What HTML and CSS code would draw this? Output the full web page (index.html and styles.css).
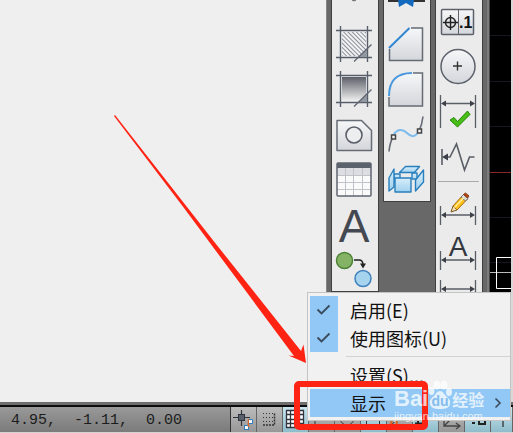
FILE: index.html
```
<!doctype html>
<html lang="zh-CN">
<head>
<meta charset="utf-8">
<title>CAD</title>
<meta name="viewport" content="width=device-width">
<link rel="stylesheet" href="styles.css">
</head>

<body>

<!-- shared gradients and dimension arrows -->
<svg class="defs" width="0" height="0" aria-hidden="true">
  <defs>
    <linearGradient id="face" x1="0" y1="0" x2="0" y2="1">
      <stop offset="0" stop-color="#f6f7f8"/><stop offset="1" stop-color="#d3d6db"/>
    </linearGradient>
    <linearGradient id="shade" x1="0" y1="0" x2="0" y2="1">
      <stop offset="0" stop-color="#5c6068"/><stop offset="1" stop-color="#f0f0f0"/>
    </linearGradient>
    <linearGradient id="ice" x1="0" y1="0" x2="0" y2="1">
      <stop offset="0" stop-color="#d8eefa"/><stop offset="1" stop-color="#9fd0ee"/>
    </linearGradient>
    <pattern id="hatch" width="3" height="3" patternUnits="userSpaceOnUse" patternTransform="rotate(-45)">
      <rect width="3" height="3" fill="#f1f2f4"/><rect width="1" height="3" fill="#8b919a"/>
    </pattern>
    <g id="dim">
      <path d="M4.500-9v19M39.500-9v19M7 0h30" fill="none" stroke="#5a5e66" stroke-width="1.300"/>
      <path d="M5 0l5-3v6zM39 0l-5-3v6z" fill="#3c4048"/>
    </g>
  </defs>
</svg>

<div class="app">
  <div class="workspace">
    <main class="canvas"></main>

    <div class="dock">
      <div class="toolbar">
        <button class="tool tool-cut" aria-label="点">
          <svg width="46" height="21"><path d="M20 0h4l-2 1z" fill="#666" stroke="#777"/></svg>
        </button>
        <button class="tool" aria-label="图案填充">
          <svg width="46" height="45">
            <rect x="9" y="10" width="26" height="26" fill="#f1f2f4"/>
            <rect x="10" y="11" width="24" height="24" fill="url(#hatch)"/>
            <path d="M4 9.500h36M4 36.500h36M8.500 5v36M35.500 5v36" stroke="#585e69" stroke-width="1.400"/>
            <path d="M35 28v8h-8z" fill="#9298a2"/>
            <path d="M39.500 23.500l-17.500 17" stroke="#5f6570" stroke-width="1.300"/>
          </svg>
        </button>
        <button class="tool" aria-label="渐变色">
          <svg width="46" height="45">
            <rect x="9" y="10" width="26" height="26" fill="#f1f2f4"/>
            <rect x="10" y="11" width="24" height="24" fill="url(#shade)"/>
            <path d="M4 9.500h36M4 36.500h36M8.500 5v36M35.500 5v36" stroke="#585e69" stroke-width="1.400"/>
            <path d="M35 28v8h-8z" fill="#9298a2"/>
            <path d="M39.500 23.500l-17.500 17" stroke="#5f6570" stroke-width="1.300"/>
          </svg>
        </button>
        <button class="tool" aria-label="面域">
          <svg width="46" height="45">
            <path d="M5 9.500h24.500l10 10V39.500H5z" fill="url(#face)" stroke="#666b75" stroke-width="1.500" stroke-linejoin="round"/>
            <circle cx="22" cy="24" r="8" fill="#eceef0" stroke="#5b606a" stroke-width="1.600"/>
          </svg>
        </button>
        <button class="tool" aria-label="表格">
          <svg width="46" height="45">
            <rect x="5" y="7" width="34" height="33" rx="1" fill="#fafafa"/>
            <rect x="5" y="12" width="34" height="7" fill="#dcdee4"/>
            <path d="M13.500 12v28M21.500 12v28M30.500 12v28M5 19.500h34M5 26.500h34M5 33.500h34" stroke="#c0c4ca"/>
            <rect x="5" y="7" width="34" height="5" fill="#5a626e"/>
            <rect x="5" y="7" width="34" height="33" rx="1" fill="none" stroke="#5f6570" stroke-width="1.500"/>
          </svg>
        </button>
        <button class="tool" aria-label="多行文字">
          <svg width="46" height="45"><text class="glyph-large" x="22" y="41" text-anchor="middle">A</text></svg>
        </button>
        <button class="tool" aria-label="添加选定对象">
          <svg width="46" height="45">
            <circle cx="12.500" cy="14.500" r="8" fill="#85b366" stroke="#4c8136" stroke-width="1.500"/>
            <circle cx="31" cy="32.500" r="8" fill="#a6d3ee" stroke="#3c80bd" stroke-width="1.500"/>
            <path d="M22 14h5q4 0 4 5" fill="none" stroke="#222" stroke-width="1.500"/>
            <path d="M28 17.500h6l-3 5z" fill="#222"/>
          </svg>
        </button>
      </div>

      <div class="toolbar">
        <button class="tool tool-cut" aria-label="分解">
          <svg width="46" height="21">
            <path d="M4 .500h37" stroke="#333" stroke-width="3"/>
            <path d="M14 0h16l-1 7-7-4-7 4z" fill="#1369bd"/>
          </svg>
        </button>
        <button class="tool" aria-label="倒角">
          <svg width="46" height="45">
            <path d="M5.500 27l20-20h13v32.500h-33z" fill="url(#face)"/>
            <path d="M5.500 28v11.500h33V7H27" fill="none" stroke="#666b75" stroke-width="1.500"/>
            <path d="M5 27L25.500 7" stroke="#3386d0" stroke-width="2"/>
          </svg>
        </button>
        <button class="tool" aria-label="圆角">
          <svg width="46" height="45">
            <path d="M5 30Q5 7 28 7h10.500v33H5z" fill="url(#face)"/>
            <path d="M5 31v9h33.500V7H29" fill="none" stroke="#666b75" stroke-width="1.500"/>
            <path d="M5 30Q5 7 28 7" fill="none" stroke="#4a9add" stroke-width="2"/>
          </svg>
        </button>
        <button class="tool" aria-label="光顺曲线">
          <svg width="46" height="45">
            <path d="M5 40.500Q6 31 9 26M35 20Q38 14 39 5.500" fill="none" stroke="#666b75" stroke-width="1.600"/>
            <path d="M9 25C13 17 19 18 23 22S31 27 35 20" fill="none" stroke="#7dbbec" stroke-width="2"/>
            <path d="M7.500 24h4v4h-4zM33.500 18h4v4h-4z" fill="#f4f4f4" stroke="#444" stroke-width="1.500"/>
          </svg>
        </button>
        <button class="tool" aria-label="截面">
          <svg width="46" height="45">
            <g fill="url(#ice)" stroke="#287fbd" stroke-width="1.400" stroke-linejoin="round">
              <path d="M10 18h6v8h-6zM28 17h5v6h-5z"/>
              <path d="M5 22l5-9v18l-5 4z"/>
              <path d="M15.500 16.500l6-6h14l-5 6z"/>
              <path d="M31.500 24l8-10v12l-8 9z"/>
              <path d="M11 22h16v14H11z"/>
            </g>
          </svg>
        </button>
      </div>

      <div class="toolbar toolbar-tall">
        <button class="tool" aria-label="公差">
          <svg width="46" height="45">
            <rect x="5.500" y="9.500" width="32" height="25" rx="1" fill="url(#face)" stroke="#5b606a" stroke-width="1.500"/>
            <path d="M22.500 10v24" stroke="#5b606a"/>
            <path d="M7 22.500h15M14.500 15v15" stroke="#222" stroke-width="1.400"/>
            <circle cx="14.500" cy="22.500" r="5" fill="none" stroke="#222" stroke-width="1.400"/>
            <text class="glyph-small" x="23" y="28">.1</text>
          </svg>
        </button>
        <button class="tool" aria-label="圆心标记">
          <svg width="46" height="45">
            <circle cx="22" cy="21.500" r="17" fill="url(#face)" stroke="#5b606a" stroke-width="1.500"/>
            <path d="M17 21h9M21.500 16.500v9" stroke="#333" stroke-width="1.400"/>
          </svg>
        </button>
        <button class="tool" aria-label="检验">
          <svg width="46" height="45">
            <path d="M4.500 5v33M39.500 5v33M7 13.500h30" stroke="#5a5e66" stroke-width="1.300"/>
            <path d="M5 13.500l5-3v6zM39 13.500l-5-3v6z" fill="#3c4048"/>
            <path d="M14 30l4-2.500 3.500 4L31.500 21l2.500 3.500L21.500 37z" fill="#47bd16" stroke="#25870b"/>
          </svg>
        </button>
        <button class="tool" aria-label="折弯线性">
          <svg width="46" height="45">
            <path d="M6 14v16M9 22h5l6.500-13 8 26 5-13h5" fill="none" stroke="#5a5e66" stroke-width="1.600"/>
            <path d="M6 22l6-3.500v7z" fill="#3c4048"/>
          </svg>
        </button>
        <hr class="rule">
        <button class="tool" aria-label="编辑标注">
          <svg width="46" height="45">
            <use href="#dim" x="0" y="31"/>
            <path d="M15 28l2-6 4 4z" fill="#f3dfb4" stroke="#7b5a22"/>
            <path d="M17 22L27 11l4.500 4L21 26z" fill="#ffc01e" stroke="#a06c14"/>
            <path d="M25 13l2.500-2.500 4.500 4-2.500 2.500z" fill="#d9d9d9" stroke="#777"/>
            <path d="M27.500 10.500l2-1.500 3.500 3-1.500 2z" fill="#b24a1c" stroke="#8b3a14"/>
            <path d="M18.500 23.500L28 13.500" stroke="#fff0a0" stroke-width="1.300"/>
          </svg>
        </button>
        <button class="tool" aria-label="编辑标注文字">
          <svg width="46" height="45">
            <use href="#dim" x="0" y="31"/>
            <text class="glyph-medium" x="22" y="27" text-anchor="middle">A</text>
          </svg>
        </button>
        <button class="tool" aria-label="标注更新">
          <svg width="46" height="45"><use href="#dim" x="0" y="15"/></svg>
        </button>
      </div>
    </div>

    <div class="drawing">
      <svg width="21" height="402">
        <path d="M0 35.500h21M0 81.500h21M0 126.500h21M0 217.500h21M0 262.500h21" stroke="#17171f"/>
        <path d="M0 172.500h21" stroke="#8a2626"/>
        <path d="M0 272.500h21" stroke="#bbb"/>
        <path d="M21 257.500H6.500v31H21" fill="none" stroke="#fff"/>
      </svg>
    </div>
  </div>

  <footer class="statusbar">
    <output class="coords">4.95,&nbsp; -1.11,&nbsp; 0.00</output>
    <button class="toggle" aria-label="推断约束">
      <svg width="25" height="25">
        <path d="M2 10.500h17M10.500 3v16" stroke="#30353d" stroke-width="1.200"/>
        <rect x="7.500" y="7.500" width="6" height="6" fill="#59616d" stroke="#30353d"/>
        <rect x="13.500" y="18.500" width="4" height="4" fill="#fff" stroke="#2f7cc0"/>
        <path d="M17.500 20v-8" stroke="#d9682a" stroke-width="1.500"/>
        <path d="M18 12.500h3.500v4H18" fill="#fff" stroke="#2f7cc0"/>
      </svg>
    </button>
    <button class="toggle" aria-label="捕捉模式">
      <svg width="25" height="25">
        <path d="M6 6.500h10M6 10.500h10M6 14.500h10" stroke="#333" stroke-width="1.200" stroke-dasharray="1 2"/>
        <path d="M6 18h11.500V6" fill="none" stroke="#333" stroke-width="1.500" stroke-dasharray="2 1"/>
      </svg>
    </button>
    <button class="toggle on" aria-label="栅格显示">
      <svg width="25" height="25">
        <rect x="3" y="3" width="18" height="18" fill="#fff"/>
        <path d="M3 3.500h18M3 7.500h18M3 12.500h18M3 16.500h18M3 20.500h18M3.500 3v18M7.500 3v18M12.500 3v18M16.500 3v18M20.500 3v18" stroke="#30353d" stroke-width="1.300"/>
      </svg>
    </button>
    <button class="toggle" aria-label="正交模式"><svg width="25" height="25"><path d="M6 5v14h13" fill="none" stroke="#333"/></svg></button>
    <button class="toggle" aria-label="极轴追踪"><svg width="25" height="25"><circle cx="12" cy="11" r="7" fill="none" stroke="#444"/></svg></button>
    <button class="toggle on" aria-label="对象捕捉"><svg width="25" height="25"><rect x="5.500" y="5.500" width="13" height="12" fill="none" stroke="#333"/></svg></button>
    <button class="toggle" aria-label="三维对象捕捉"><svg width="25" height="25"><path d="M5 17l12-10" stroke="#333"/><circle cx="7" cy="16" r="3" fill="none" stroke="#d9682a" stroke-width="2"/></svg></button>
    <button class="toggle on" aria-label="对象捕捉追踪"><svg width="25" height="25"><path d="M2 16.500h13M5 13v7" stroke="#222" stroke-width="2"/></svg></button>
    <button class="toggle" aria-label="动态 UCS"><svg width="25" height="25"><path d="M5 5v14h15M5 19l12-12M17 16l4 3-4 3" fill="none" stroke="#444" stroke-width="1.300"/></svg></button>
    <button class="toggle on" aria-label="动态输入"><svg width="25" height="25"><path d="M7 16h3M14 10h6v7h-6z" fill="none" stroke="#222" stroke-width="2"/></svg></button>
    <button class="toggle on" aria-label="线宽"><svg width="25" height="25"><path d="M12 5v15" stroke="#333" stroke-width="1.300"/></svg></button>
  </footer>

  <div class="menu" role="menu">
    <button class="item checked" role="menuitemcheckbox" aria-checked="true">
      <span class="mark"><svg width="16" height="12"><path d="M1.500 5.500l4 4 8-8" fill="none" stroke="#3b4b5c" stroke-width="1.800"/></svg></span>
      <span>启用(E)</span>
    </button>
    <button class="item checked" role="menuitemcheckbox" aria-checked="true">
      <span class="mark"><svg width="16" height="12"><path d="M1.500 5.500l4 4 8-8" fill="none" stroke="#3b4b5c" stroke-width="1.800"/></svg></span>
      <span>使用图标(U)</span>
    </button>
    <hr class="divider">
    <button class="item" role="menuitem"><span class="mark"></span><span>设置(S)...</span></button>
    <button class="item current" role="menuitem" aria-haspopup="true">
      <span class="mark"></span><span>显示</span>
      <svg class="more" width="8" height="12"><path d="M1.500 1.500l4.500 4.500-4.500 4.500" fill="none" stroke="#3b4b5c" stroke-width="1.600"/></svg>
    </button>
  </div>

  <svg class="arrow" width="192" height="250" aria-hidden="true">
    <path d="M0 1L1 0 100 126.500 187 236l2.500-6.500 2.500 18.500-17.500-7.500 5.500.500L70 93z" fill="#ff2314"/>
  </svg>
  <div class="highlight"></div>

  <div class="watermark">
    <div class="brand">
      <span class="latin">Bai</span>
      <svg width="24" height="30">
        <g fill="#fff">
          <ellipse cx="3.500" cy="11" rx="3" ry="4"/>
          <ellipse cx="9" cy="5" rx="3.500" ry="4.500"/>
          <ellipse cx="16" cy="5" rx="3.500" ry="4.500"/>
          <ellipse cx="21" cy="12" rx="3" ry="4"/>
          <path d="M12 11c3 0 4 3 6 5s5 4 4 8-4 5-10 5-9-1-10-5 2-6 4-8 3-5 6-5z"/>
        </g>
        <text class="du" x="12" y="26" text-anchor="middle">du</text>
      </svg>
      <span class="hanzi">经验</span>
    </div>
    <div class="site">jingyan.baidu.com</div>
  </div>
</div>

</body>
</html>
```
FILE: styles.css
```
* {
	box-sizing: border-box;
}
body {
	margin: 0;
	font-family: "Liberation Sans", "Noto Sans CJK SC", sans-serif;
	background: #efefef;
}
button {
	margin: 0;
	padding: 0;
	border: 0;
	background: none;
	font: inherit;
	color: inherit;
}
svg {
	display: block;
}
.defs {
	position: absolute;
}
.app {
	position: relative;
	display: flex;
	flex-direction: column;
	height: 100vh;
	overflow: hidden;
}

/* drawing area with docked toolbars */
.workspace {
	flex: 1;
	min-height: 0;
	display: flex;
	overflow: hidden;
}
.canvas {
	flex: 1;
	background: #efefef;
}
.dock {
	display: flex;
	align-items: flex-start;
	gap: 4px;
	padding: 0 7px 0 5px;
	background: #686868;
	box-shadow: inset 1px 0 #858585, inset -1px 0 #484848, inset -3px 0 #7d7d7d;
}
.toolbar {
	width: 48px;
	border: 1px solid #3f3f3f;
	border-top: 0;
	background: #ebebeb;
}
.toolbar-tall {
	border-bottom: 0;
}
.tool {
	display: block;
	width: 100%;
	height: 45px;
}
.tool svg {
	overflow: visible;
}
.tool-cut {
	height: 21px;
}
.tool-cut svg {
	overflow: hidden;
}
.rule {
	height: 1px;
	margin: 1px 3px 2px 2px;
	border: 0;
	background: #aaa;
}
.glyph-large {
	font-size: 46px;
	fill: #444850;
}
.glyph-medium {
	font-size: 28px;
	fill: #35383f;
}
.glyph-small {
	font-size: 16px;
	font-weight: bold;
	fill: #111;
}
.drawing {
	background: #000;
	border-right: 2px solid #d8d8d8;
}

/* status bar */
.statusbar {
	display: flex;
	height: 31px;
	border-top: 3px solid #6e6e6e;
	border-bottom: 1px solid #d5d5d5;
	background: #888;
	box-shadow: inset 0 2px #0c0c0c;
	padding-top: 2px;
}
.coords {
	width: 231px;
	padding-left: 11px;
	border-right: 1px solid #333;
	background: linear-gradient(#999, #7b7b7b);
	color: #1c1c1c;
	font: 15px/28px "Liberation Mono", monospace;
}
.toggle {
	width: 26px;
	border-right: 1px solid #666;
	background: linear-gradient(#bcbcbc, #979797);
	overflow: hidden;
}
.toggle.on {
	background: linear-gradient(#c8e6ef, #8fbccb);
}
.toggle:last-child {
	flex: 1;
}

/* context menu */
.menu {
	position: absolute;
	right: 2px;
	bottom: 12px;
	width: 204px;
	padding: 3px 0 3px 2px;
	border: 1px solid #c4c4c4;
	background: #f1f1f1;
	font: 18px/28px "Noto Sans CJK SC", sans-serif;
	color: #111;
}
.item {
	display: flex;
	align-items: center;
	width: 100%;
	height: 28px;
	text-align: left;
}
.mark {
	display: flex;
	align-items: center;
	justify-content: center;
	width: 28px;
	height: 28px;
	margin-right: 12px;
}
.checked .mark,
.current {
	background: #91c8f6;
}
.more {
	margin: 0 8px 0 auto;
}
.divider {
	height: 1px;
	margin: 4px 0 4px 36px;
	border: 0;
	background: #d2d2d2;
}

/* callouts */
.arrow {
	position: absolute;
	right: 207px;
	bottom: 68px;
}
.highlight {
	position: absolute;
	right: 85px;
	bottom: 3px;
	width: 134px;
	height: 49px;
	border: 6px solid #ff2314;
	border-radius: 5px;
}

.watermark {
	position: absolute;
	right: 27px;
	bottom: 11px;
	width: 92px;
	color: #fff;
	opacity: .75;
}
.brand {
	display: flex;
	align-items: flex-end;
	height: 30px;
}
.latin {
	font: bold 22px/22px "Liberation Sans", sans-serif;
}
.hanzi {
	font: bold 16px/22px "Noto Sans CJK SC", sans-serif;
}
.du {
	font-size: 14px;
	font-weight: bold;
	fill: #7db9ea;
}
.site {
	font-size: 11px;
	line-height: 12px;
}
```
